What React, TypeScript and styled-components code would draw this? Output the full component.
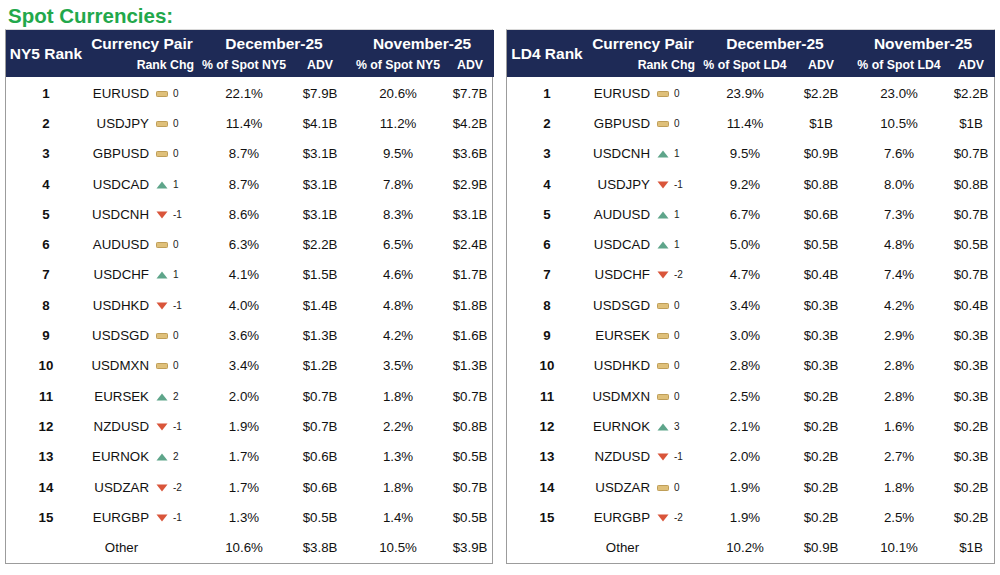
import React from "react";
import styled, { createGlobalStyle } from "styled-components";

const GlobalStyle = createGlobalStyle`
  body {
    margin: 0;
    background: #ffffff;
    font-family: "Liberation Sans", Arial, sans-serif;
  }
`;

const Page = styled.div`
  width: 1000px;
  height: 575px;
  padding: 5px 5px 0;
  box-sizing: border-box;
`;

const Title = styled.h1`
  margin: 0 0 2px 3px;
  font-size: 20.5px;
  line-height: 22px;
  font-weight: bold;
  color: #22a84b;
`;

const Tables = styled.div`
  display: flex;
  gap: 13px;
  align-items: flex-start;
`;

const Panel = styled.div<{ $width: number }>`
  width: ${(p) => p.$width}px;
  border: 1px solid #9c9c9c;
  border-top: 1px solid #d8d8d8;
  box-sizing: border-box;
`;

const Table = styled.table`
  width: 100%;
  border-collapse: collapse;
  table-layout: fixed;
  color: #111;
`;

const Head = styled.thead`
  background: #1e2a56;
  color: #ffffff;
`;

const HeadRow = styled.tr<{ $h: number }>`
  height: ${(p) => p.$h}px;
`;

const HeadCell = styled.th<{ $size?: number; $align?: string; $shift?: string }>`
  padding: ${(p) => p.$shift ?? "0"};
  padding-right: ${(p) => (p.$align === "right" ? "4px" : "0")};
  font-size: ${(p) => p.$size ?? 15.5}px;
  font-weight: bold;
  text-align: ${(p) => p.$align ?? "center"};
  white-space: nowrap;
  vertical-align: middle;
`;

const Spacer = styled.tr`
  height: 1px;
`;

const Row = styled.tr`
  height: 30.3px;
`;

const Cell = styled.td<{ $bold?: boolean; $align?: string }>`
  padding: 0;
  font-size: 13.3px;
  font-weight: ${(p) => (p.$bold ? "bold" : "normal")};
  text-align: ${(p) => p.$align ?? "center"};
  white-space: nowrap;
  vertical-align: middle;
`;

const PairCell = styled(Cell)`
  padding-right: 2px;
`;

const ChgCell = styled.td`
  padding: 1px 0 0 5px;
  white-space: nowrap;
  vertical-align: middle;
`;

const ChgWrap = styled.div`
  display: flex;
  align-items: center;
  gap: 5px;
  font-size: 10px;
  line-height: 12px;
  color: #222;
`;

const OtherCell = styled(Cell)`
  padding-left: 6px;
`;

type Fx = [number, string, number, string, string, string, string];

const ny5: Fx[] = [
  [1, "EURUSD", 0, "22.1%", "$7.9B", "20.6%", "$7.7B"],
  [2, "USDJPY", 0, "11.4%", "$4.1B", "11.2%", "$4.2B"],
  [3, "GBPUSD", 0, "8.7%", "$3.1B", "9.5%", "$3.6B"],
  [4, "USDCAD", 1, "8.7%", "$3.1B", "7.8%", "$2.9B"],
  [5, "USDCNH", -1, "8.6%", "$3.1B", "8.3%", "$3.1B"],
  [6, "AUDUSD", 0, "6.3%", "$2.2B", "6.5%", "$2.4B"],
  [7, "USDCHF", 1, "4.1%", "$1.5B", "4.6%", "$1.7B"],
  [8, "USDHKD", -1, "4.0%", "$1.4B", "4.8%", "$1.8B"],
  [9, "USDSGD", 0, "3.6%", "$1.3B", "4.2%", "$1.6B"],
  [10, "USDMXN", 0, "3.4%", "$1.2B", "3.5%", "$1.3B"],
  [11, "EURSEK", 2, "2.0%", "$0.7B", "1.8%", "$0.7B"],
  [12, "NZDUSD", -1, "1.9%", "$0.7B", "2.2%", "$0.8B"],
  [13, "EURNOK", 2, "1.7%", "$0.6B", "1.3%", "$0.5B"],
  [14, "USDZAR", -2, "1.7%", "$0.6B", "1.8%", "$0.7B"],
  [15, "EURGBP", -1, "1.3%", "$0.5B", "1.4%", "$0.5B"],
];

const ld4: Fx[] = [
  [1, "EURUSD", 0, "23.9%", "$2.2B", "23.0%", "$2.2B"],
  [2, "GBPUSD", 0, "11.4%", "$1B", "10.5%", "$1B"],
  [3, "USDCNH", 1, "9.5%", "$0.9B", "7.6%", "$0.7B"],
  [4, "USDJPY", -1, "9.2%", "$0.8B", "8.0%", "$0.8B"],
  [5, "AUDUSD", 1, "6.7%", "$0.6B", "7.3%", "$0.7B"],
  [6, "USDCAD", 1, "5.0%", "$0.5B", "4.8%", "$0.5B"],
  [7, "USDCHF", -2, "4.7%", "$0.4B", "7.4%", "$0.7B"],
  [8, "USDSGD", 0, "3.4%", "$0.3B", "4.2%", "$0.4B"],
  [9, "EURSEK", 0, "3.0%", "$0.3B", "2.9%", "$0.3B"],
  [10, "USDHKD", 0, "2.8%", "$0.3B", "2.8%", "$0.3B"],
  [11, "USDMXN", 0, "2.5%", "$0.2B", "2.8%", "$0.3B"],
  [12, "EURNOK", 3, "2.1%", "$0.2B", "1.6%", "$0.2B"],
  [13, "NZDUSD", -1, "2.0%", "$0.2B", "2.7%", "$0.3B"],
  [14, "USDZAR", 0, "1.9%", "$0.2B", "1.8%", "$0.2B"],
  [15, "EURGBP", -2, "1.9%", "$0.2B", "2.5%", "$0.2B"],
];

const ChangeIcon = ({ value }: { value: number }) => {
  if (value > 0)
    return (
      <svg width="12" height="8" viewBox="0 0 12 8">
        <polygon points="6,0.5 11.5,7.5 0.5,7.5" fill="#5ea58a" />
      </svg>
    );
  if (value < 0)
    return (
      <svg width="12" height="8" viewBox="0 0 12 8">
        <polygon points="0.5,0.5 11.5,0.5 6,7.5" fill="#d9553a" />
      </svg>
    );
  return (
    <svg width="12" height="6" viewBox="0 0 12 6">
      <rect x="0.5" y="0.5" width="11" height="5" rx="0.8" fill="#dfc07a" stroke="#bf9e58" strokeWidth="1" />
    </svg>
  );
};

const cols = [80, 65, 47, 92, 60, 96, 48];

type SpotTableProps = {
  venue: string;
  width: number;
  rows: Fx[];
  other: [string, string, string, string];
};

const SpotTable = ({ venue, width, rows, other }: SpotTableProps) => (
  <Panel $width={width}>
    <Table>
      <colgroup>
        {cols.map((w, i) => (
          <col key={i} style={{ width: w }} />
        ))}
      </colgroup>
      <Head>
        <HeadRow $h={26}>
          <HeadCell rowSpan={2}>{venue} Rank</HeadCell>
          <HeadCell colSpan={2} $shift="2px 0 0">
            Currency Pair
          </HeadCell>
          <HeadCell colSpan={2} $shift="2px 0 0">
            December-25
          </HeadCell>
          <HeadCell colSpan={2} $shift="2px 0 0">
            November-25
          </HeadCell>
        </HeadRow>
        <HeadRow $h={21}>
          <HeadCell colSpan={2} $size={12.3} $align="right" $shift="0 0 3px">
            Rank Chg
          </HeadCell>
          <HeadCell $size={12.3} $shift="0 0 3px">
            % of Spot {venue}
          </HeadCell>
          <HeadCell $size={12.3} $shift="0 0 3px">
            ADV
          </HeadCell>
          <HeadCell $size={12.3} $shift="0 0 3px">
            % of Spot {venue}
          </HeadCell>
          <HeadCell $size={12.3} $shift="0 0 3px">
            ADV
          </HeadCell>
        </HeadRow>
      </Head>
      <tbody>
        <Spacer />
        {rows.map(([rank, pair, chg, decPct, decAdv, novPct, novAdv]) => (
          <Row key={rank}>
            <Cell $bold>{rank}</Cell>
            <PairCell $align="right">{pair}</PairCell>
            <ChgCell>
              <ChgWrap>
                <ChangeIcon value={chg} />
                {chg}
              </ChgWrap>
            </ChgCell>
            <Cell>{decPct}</Cell>
            <Cell>{decAdv}</Cell>
            <Cell>{novPct}</Cell>
            <Cell>{novAdv}</Cell>
          </Row>
        ))}
        <Row>
          <Cell />
          <OtherCell>Other</OtherCell>
          <Cell />
          <Cell>{other[0]}</Cell>
          <Cell>{other[1]}</Cell>
          <Cell>{other[2]}</Cell>
          <Cell>{other[3]}</Cell>
        </Row>
      </tbody>
    </Table>
  </Panel>
);

export default function App() {
  return (
    <Page>
      <GlobalStyle />
      <Title>Spot Currencies:</Title>
      <Tables>
        <SpotTable venue="NY5" width={488} rows={ny5} other={["10.6%", "$3.8B", "10.5%", "$3.9B"]} />
        <SpotTable venue="LD4" width={489} rows={ld4} other={["10.2%", "$0.9B", "10.1%", "$1B"]} />
      </Tables>
    </Page>
  );
}
